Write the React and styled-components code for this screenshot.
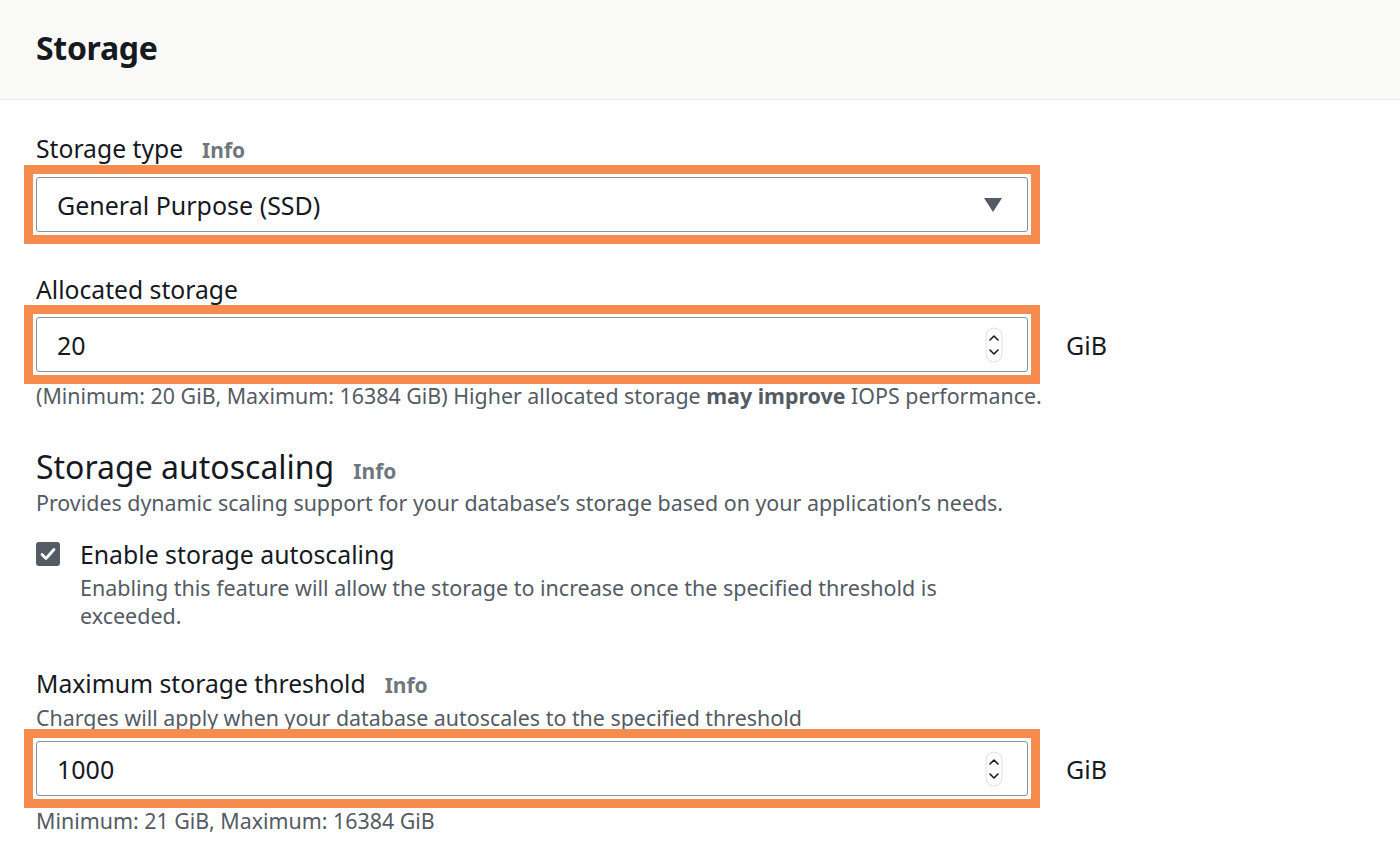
import styled, { createGlobalStyle } from "styled-components";

const GlobalStyle = createGlobalStyle`
  body {
    margin: 0;
    background: #fff;
    font-family: "Noto Sans", "Open Sans", sans-serif;
    color: #16191f;
  }
`;

const Panel = styled.div`
  width: 1400px;
  min-height: 866px;
  overflow: hidden;
`;

const Header = styled.div`
  height: 100px;
  box-sizing: border-box;
  display: flex;
  align-items: center;
  padding: 0 36px 4px;
  background: #fafaf8;
  border-bottom: 1px solid #ece6e0;
  h2 {
    margin: 0;
    font-size: 32px;
    font-weight: 700;
    letter-spacing: -0.3px;
  }
`;

const Body = styled.div`
  padding: 34px 36px 0;
  display: flex;
  flex-direction: column;
`;

const Field = styled.div`
  display: flex;
  flex-direction: column;
  margin-top: ${(p) => p.$top || 0}px;
`;

const Label = styled.div`
  font-size: ${(p) => p.$size || 24.7}px;
  line-height: ${(p) => (p.$size ? 36 : 30)}px;
  display: flex;
  align-items: baseline;
  gap: 19px;
`;

const Info = styled.span`
  font-size: 21px;
  font-weight: 700;
  color: #6f777e;
`;

const Hint = styled.div`
  font-size: 21.4px;
  line-height: 24px;
  color: #545b64;
  margin-top: ${(p) => p.$top || 0}px;
  b {
    font-weight: 700;
  }
`;

const Row = styled.div`
  display: flex;
  align-items: center;
  gap: 38px;
  margin-top: ${(p) => p.$top || 13}px;
`;

const Highlight = styled.div`
  margin: -12px;
  padding: 3px;
  border: 9px solid #f68b4e;
  background: #fff;
`;

const Control = styled.div`
  width: 992px;
  height: 55px;
  box-sizing: border-box;
  border: 1px solid #879596;
  border-radius: 3px;
  display: flex;
  align-items: center;
  justify-content: space-between;
  padding: 0 24px 0 20px;
  font-size: 25px;
  background: #fff;
`;

const Unit = styled.span`
  font-size: 25px;
`;

const CheckRow = styled.div`
  display: flex;
  gap: 20px;
  margin-top: 24px;
`;

const Box = styled.div`
  width: 24px;
  height: 24px;
  margin-top: 3px;
  border-radius: 3px;
  background: #545b64;
  display: flex;
  align-items: center;
  justify-content: center;
  flex-shrink: 0;
`;

const CheckText = styled.div`
  width: 880px;
  .title {
    font-size: 24.8px;
    line-height: 30px;
  }
  .desc {
    font-size: 21.5px;
    line-height: 28px;
    color: #545b64;
    margin-top: 5px;
  }
`;

const Caret = () => (
  <svg width="20" height="16" viewBox="0 0 20 16">
    <path d="M1 1h18l-9 14z" fill="#545b64" />
  </svg>
);

const Spinner = () => (
  <svg width="18" height="36" viewBox="0 0 18 36">
    <rect x="1" y="1" width="16" height="34" rx="8" fill="#fff" stroke="#ecdcd0" />
    <path d="M5 13l4-4 4 4M5 23l4 4 4-4" fill="none" stroke="#16191f" strokeWidth="1.6" strokeLinecap="round" strokeLinejoin="round" />
  </svg>
);

const Check = () => (
  <svg width="18" height="18" viewBox="0 0 18 18">
    <path d="M3 9.5l4 4 8-9" fill="none" stroke="#fff" strokeWidth="2.8" strokeLinecap="round" strokeLinejoin="round" />
  </svg>
);

export default function App() {
  return (
    <Panel>
      <GlobalStyle />
      <Header>
        <h2>Storage</h2>
      </Header>
      <Body>
        <Field>
          <Label>
            Storage type <Info>Info</Info>
          </Label>
          <Row $top={12}>
            <Highlight>
              <Control>
                General Purpose (SSD)
                <Caret />
              </Control>
            </Highlight>
          </Row>
        </Field>

        <Field $top={43}>
          <Label>Allocated storage</Label>
          <Row $top={12}>
            <Highlight>
              <Control>
                20
                <Spinner />
              </Control>
            </Highlight>
            <Unit>GiB</Unit>
          </Row>
          <Hint $top={12}>
            (Minimum: 20 GiB, Maximum: 16384 GiB) Higher allocated storage <b>may improve</b> IOPS performance.
          </Hint>
        </Field>

        <Field $top={41}>
          <Label $size={32}>
            Storage autoscaling <Info>Info</Info>
          </Label>
          <Hint $top={2}>
            Provides dynamic scaling support for your database’s storage based on your application’s needs.
          </Hint>
          <CheckRow>
            <Box>
              <Check />
            </Box>
            <CheckText>
              <div className="title">Enable storage autoscaling</div>
              <div className="desc">
                Enabling this feature will allow the storage to increase once the specified threshold is exceeded.
              </div>
            </CheckText>
          </CheckRow>
        </Field>

        <Field $top={39}>
          <Label>
            Maximum storage threshold <Info>Info</Info>
          </Label>
          <Hint $top={6}>Charges will apply when your database autoscales to the specified threshold</Hint>
          <Row $top={11}>
            <Highlight>
              <Control>
                1000
                <Spinner />
              </Control>
            </Highlight>
            <Unit>GiB</Unit>
          </Row>
          <Hint $top={13}>Minimum: 21 GiB, Maximum: 16384 GiB</Hint>
        </Field>
      </Body>
    </Panel>
  );
}
